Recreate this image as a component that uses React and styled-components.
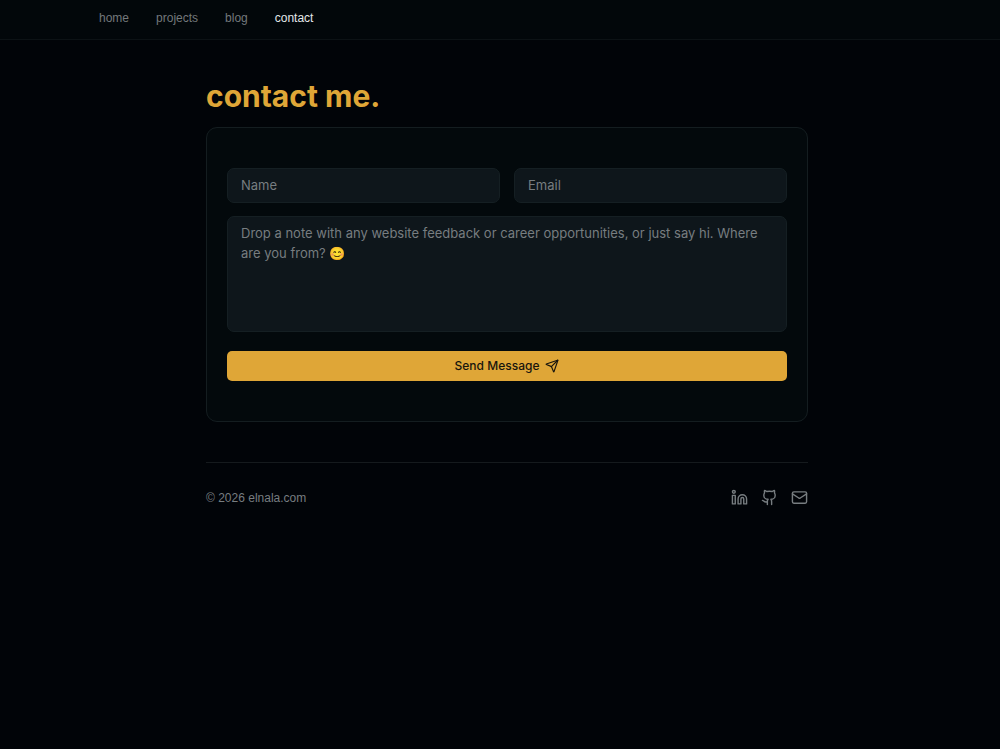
import React, { useState } from "react";
import styled, { createGlobalStyle } from "styled-components";
import { Github, Linkedin, Mail, Send } from "lucide-react";

const GlobalStyle = createGlobalStyle`
  * {
    box-sizing: border-box;
  }

  body {
    margin: 0;
    background: #010408;
    color: #e4e7e9;
    font-family: "Liberation Sans", Arial, sans-serif;
  }
`;

const Page = styled.div`
  min-height: 100vh;
`;

const Header = styled.header`
  padding-left: 14px;
  background: #02070a;
  border-bottom: 1px solid #0c1215;
`;

const Nav = styled.nav`
  display: flex;
  gap: 27px;
  max-width: 816px;
  height: 39px;
  margin: 0 auto;
  padding-top: 8px;
`;

const NavLink = styled.a`
  color: ${(props) => (props.$active ? "#e4e7e9" : "#73787b")};
  font-size: 12px;
  line-height: 20px;
  text-decoration: none;
`;

const Content = styled.div`
  padding-left: 14px;
`;

const Column = styled.div`
  max-width: 602px;
  margin: 0 auto;
`;

const Title = styled.h1`
  margin: 0;
  padding: 38px 0 13px;
  color: #dfa637;
  font-family: Inter, sans-serif;
  font-size: 30px;
  font-weight: 700;
  line-height: 36px;
`;

const Card = styled.form`
  display: flex;
  flex-direction: column;
  padding: 40px 20px;
  background: #03090c;
  border: 1px solid #141d20;
  border-radius: 11px;
`;

const Fields = styled.div`
  display: grid;
  grid-template-columns: 1fr 1fr;
  gap: 13px 14px;
`;

const TextInput = styled.input`
  width: 100%;
  height: 35px;
  padding: 0 13px 2px;
  background: #0e161b;
  border: 1px solid #151f23;
  border-radius: 7px;
  color: #e4e7e9;
  font: 400 13px/20px Inter, sans-serif;
  outline: none;

  &::placeholder {
    color: #777d80;
    opacity: 1;
  }

  &:focus {
    border-color: #dfa637;
  }
`;

const MessageInput = styled(TextInput)`
  display: block;
  grid-column: 1 / -1;
  height: 116px;
  padding: 6px 13px;
  resize: none;
`;

const SubmitButton = styled.button`
  display: flex;
  align-items: center;
  justify-content: center;
  gap: 6px;
  height: 30px;
  margin-top: 19px;
  background: #dfa637;
  border: 0;
  border-radius: 5px;
  color: #17150e;
  font: 500 12px/20px Inter, sans-serif;
  cursor: pointer;
`;

const Footer = styled.footer`
  display: flex;
  align-items: center;
  justify-content: space-between;
  margin-top: 40px;
  padding-top: 25px;
  border-top: 1px solid #151a1d;
  color: #777d80;
  font-size: 12px;
  line-height: 20px;
`;

const Socials = styled.div`
  display: flex;
  gap: 13px;
  padding-bottom: 1px;
`;

const SocialLink = styled.a`
  display: flex;
  color: #777d80;
`;

const links = ["home", "projects", "blog", "contact"];

const socials = [
  { name: "LinkedIn", href: "#linkedin", Icon: Linkedin },
  { name: "GitHub", href: "#github", Icon: Github },
  { name: "Email", href: "#email", Icon: Mail },
];

function App() {
  const [form, setForm] = useState({ name: "", email: "", message: "" });

  const handleChange = (e) => {
    setForm({ ...form, [e.target.name]: e.target.value });
  };

  return (
    <Page>
      <GlobalStyle />
      <Header>
        <Nav>
          {links.map((link) => (
            <NavLink key={link} href={`#${link}`} $active={link === "contact"}>
              {link}
            </NavLink>
          ))}
        </Nav>
      </Header>
      <Content>
        <Column>
          <main>
            <Title>contact me.</Title>
            <Card onSubmit={(e) => e.preventDefault()}>
              <Fields>
                <TextInput name="name" aria-label="Name" placeholder="Name" value={form.name} onChange={handleChange} />
                <TextInput name="email" type="email" aria-label="Email" placeholder="Email" value={form.email} onChange={handleChange} />
                <MessageInput
                  as="textarea"
                  name="message"
                  aria-label="Message"
                  placeholder="Drop a note with any website feedback or career opportunities, or just say hi. Where are you from? 😊"
                  value={form.message}
                  onChange={handleChange}
                />
              </Fields>
              <SubmitButton type="submit">
                Send Message
                <Send size={14} />
              </SubmitButton>
            </Card>
          </main>
          <Footer>
            <span>© 2026 elnala.com</span>
            <Socials>
              {socials.map(({ name, href, Icon }) => (
                <SocialLink key={name} href={href} aria-label={name}>
                  <Icon size={17} />
                </SocialLink>
              ))}
            </Socials>
          </Footer>
        </Column>
      </Content>
    </Page>
  );
}

export default App;
